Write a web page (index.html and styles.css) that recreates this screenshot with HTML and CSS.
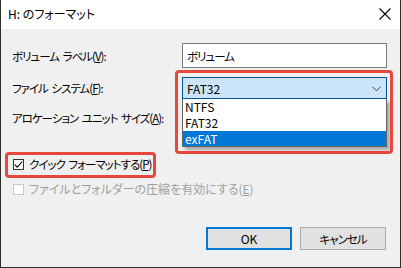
FILE: index.html
```html
<!DOCTYPE html>
<html lang="ja">
<head>
<meta charset="utf-8">
<title>H: のフォーマット</title>
<link rel="stylesheet" href="styles.css">
</head>
<body>
<div class="window">
  <div class="titlebar">
    <span class="title">H: のフォーマット</span>
    <svg class="close" width="12" height="12" viewBox="0 0 12 12"><path d="M0.5 0.5 L11.5 11.5 M11.5 0.5 L0.5 11.5" stroke="#000" stroke-width="1.1" fill="none"/></svg>
  </div>
  <div class="body">
    <div class="row r1">
      <span class="label jp">ボリューム ラベル(<u>V</u>):</span>
      <div class="field input"><span class="jp">ボリューム</span></div>
    </div>
    <div class="row r2">
      <span class="label jp">ファイル システム(<u>F</u>):</span>
      <div class="field combo open">
        <span>FAT32</span>
        <svg class="chev" width="9" height="6" viewBox="0 0 9 6"><path d="M0.5 0.8 L4.5 4.8 L8.5 0.8" stroke="#3c3c3c" stroke-width="1" fill="none"/></svg>
        <div class="list">
          <div class="item">NTFS</div>
          <div class="item">FAT32</div>
          <div class="item sel">exFAT</div>
        </div>
      </div>
    </div>
    <div class="row r3">
      <span class="label jp">アロケーション ユニット サイズ(<u>A</u>):</span>
      <div class="field combo"></div>
    </div>
    <div class="check c1">
      <span class="box checked"><svg width="9" height="9" viewBox="0 0 9 9"><path d="M0.8 4.6 L3.3 7.1 L8.3 1.5" stroke="#000" stroke-width="1.1" fill="none"/></svg></span>
      <span class="ctext jp">クイック フォーマットする(<u>P</u>)</span>
    </div>
    <div class="check c2 disabled">
      <span class="box"></span>
      <span class="ctext jp wide">ファイルとフォルダーの圧縮を有効にする(<u>E</u>)</span>
    </div>
    <div class="buttons">
      <div class="btn default">OK</div>
      <div class="btn"><span class="jp">キャンセル</span></div>
    </div>
  </div>
  <div class="mark mark1"></div>
  <div class="mark mark2"></div>
</div>
</body>
</html>
```
FILE: styles.css
```css
html, body {
  margin: 0;
  padding: 0;
  background: #f0f0f0;
}
* { box-sizing: border-box; }
.window {
  position: relative;
  width: 401px;
  height: 268px;
  border: 1px solid #2e2e2e;
  border-top: 0;
  background: #f0f0f0;
  display: flex;
  flex-direction: column;
  font-family: "Noto Sans CJK JP", sans-serif;
  font-feature-settings: "palt";
  font-size: 12px;
  color: #000;
  overflow: hidden;
}
.jp {
  font-size: 11.5px;
  letter-spacing: -1px;
  word-spacing: 2px;
}
.jp.wide { letter-spacing: 0; word-spacing: 0; font-size: 12px; }
.titlebar {
  height: 29px;
  background: #fff;
  display: flex;
  align-items: center;
  justify-content: space-between;
  padding: 0 9px 0 7px;
}
.title { font-size: 12px; line-height: 14px; margin-top: -1px; }
.close { display: block; margin-top: -2px; }
.body {
  flex: 1;
  display: flex;
  flex-direction: column;
  padding: 0 13px 0 11px;
}
.row {
  display: flex;
  align-items: center;
  justify-content: space-between;
}
.r1 { margin-top: 14px; height: 25px; }
.r2 { margin-top: 9px; height: 22px; position: relative; z-index: 2; }
.r3 { margin-top: 8px; height: 22px; }
.label { line-height: 14px; white-space: nowrap; }
.field {
  width: 205px;
  height: 100%;
  display: flex;
  align-items: center;
  padding-left: 4px;
  white-space: nowrap;
}
.input {
  background: #fff;
  border: 1px solid #7a7a7a;
}
.combo {
  border: 1px solid #adadad;
  background: #e1e1e1;
  justify-content: space-between;
  padding-right: 5px;
}
.combo.open {
  position: relative;
  background: #cce4f7;
  border-color: #005499;
}
.chev { display: block; margin-top: 1px; }
.list {
  position: absolute;
  left: -1px;
  top: 21px;
  width: 205px;
  background: #fff;
  border: 1px solid #646464;
  border-top: 0;
  box-shadow: 3px 3px 3px rgba(0,0,0,0.3);
}
.item {
  height: 16px;
  line-height: 16px;
  padding-left: 2px;
}
.item.sel {
  height: 15px;
  line-height: 15px;
  background: #0078d7;
  color: #fff;
}
.check {
  display: flex;
  align-items: center;
  height: 14px;
  padding-left: 1px;
}
.c1 { margin-top: 28px; }
.c2 { margin-top: 11px; }
.box {
  width: 11px;
  height: 11px;
  border: 1px solid #333;
  background: #fff;
  display: flex;
  align-items: center;
  justify-content: center;
  margin-right: 5px;
}
.box svg { display: block; }
.ctext { line-height: 14px; white-space: nowrap; }
.disabled .box { border-color: #c8c8c8; background: #fff; }
.disabled .ctext { color: #a0a0a0; }
.buttons {
  margin-top: 31px;
  display: flex;
  justify-content: flex-end;
  gap: 8px;
  padding-right: 1px;
}
.btn {
  width: 86px;
  height: 23px;
  background: #e1e1e1;
  border: 1px solid #adadad;
  display: flex;
  align-items: center;
  justify-content: center;
}
.btn.default { border: 2px solid #0078d7; }
.mark {
  position: absolute;
  border: 3px solid #e8473d;
  border-radius: 4px;
  z-index: 5;
}
.mark1 { left: 174px; top: 70px; width: 218px; height: 84px; }
.mark2 { left: 4px; top: 152px; width: 151px; height: 26px; }
```
